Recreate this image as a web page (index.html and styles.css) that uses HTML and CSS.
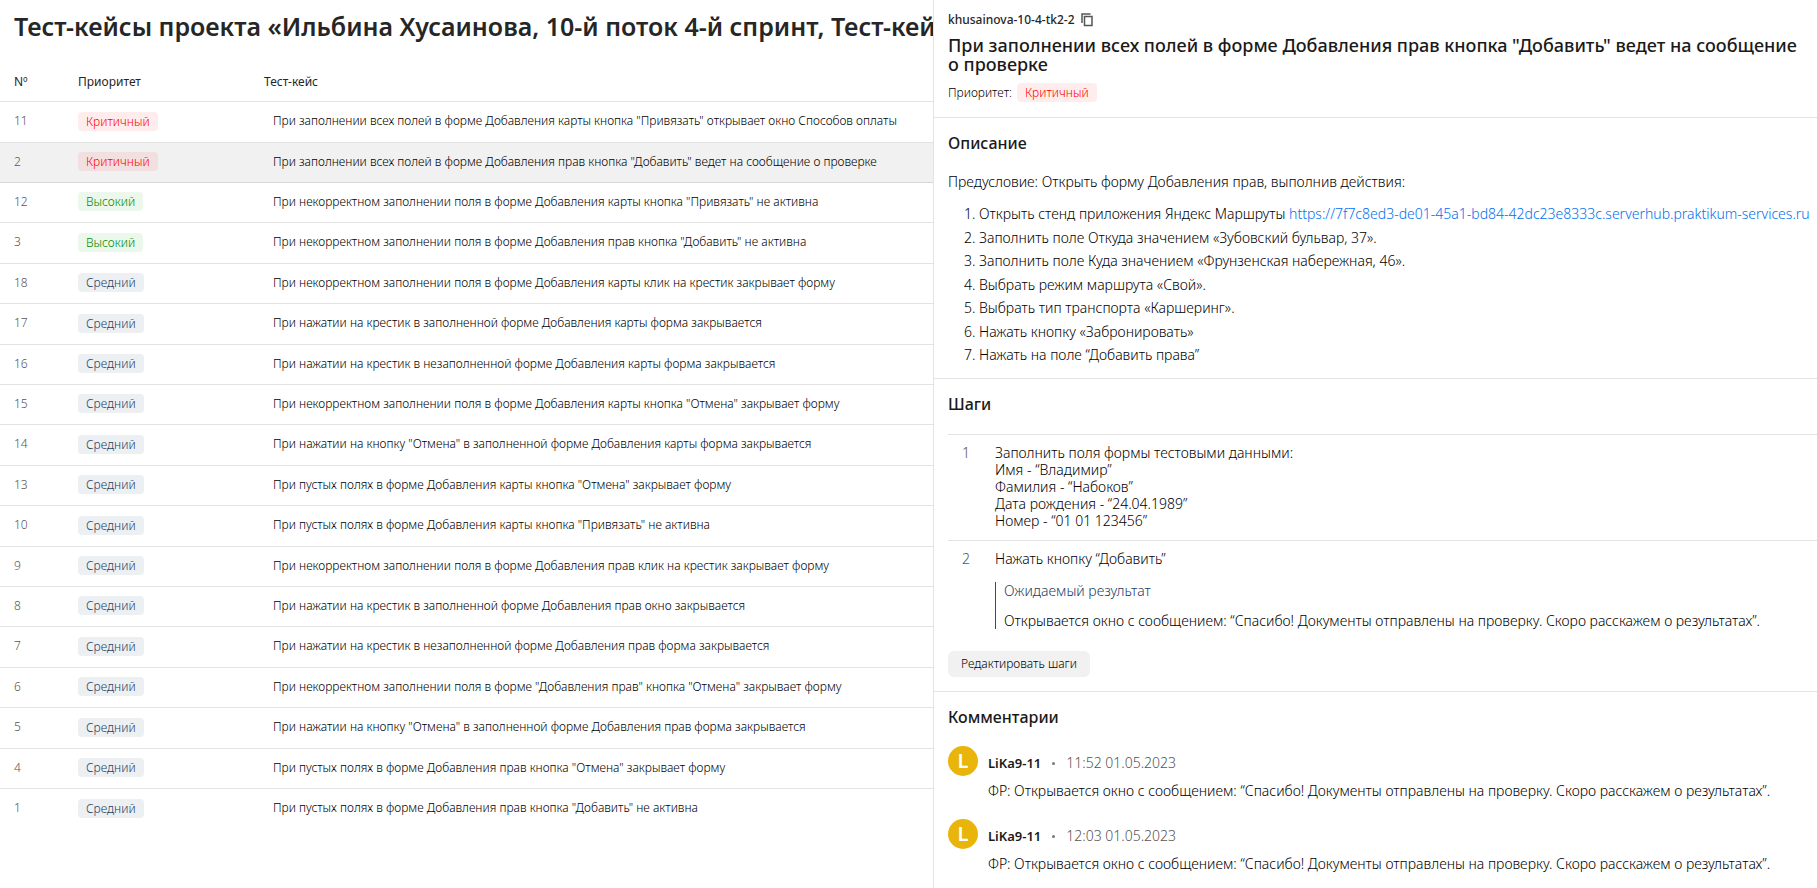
FILE: index.html
```
<!DOCTYPE html>
<html lang="ru">
<head>
<meta charset="utf-8">
<title>Тест-кейсы проекта</title>
<link rel="stylesheet" href="styles.css">
</head>
<body>
<div class="layout">
  <main class="cases">
    <h1 class="cases__title">Тест-кейсы проекта «Ильбина Хусаинова, 10-й поток 4-й спринт, Тест-кейсы»</h1>
    <table class="table">
      <thead>
        <tr><th class="table__num">Nº</th><th class="table__priority">Приоритет</th><th class="table__case">Тест-кейс</th></tr>
      </thead>
      <tbody>
        <tr><td>11</td><td><span class="badge badge--critical">Критичный</span></td><td>При заполнении всех полей в форме Добавления карты кнопка "Привязать" открывает окно Способов оплаты</td></tr>
        <tr class="is-selected"><td>2</td><td><span class="badge badge--critical">Критичный</span></td><td>При заполнении всех полей в форме Добавления прав кнопка "Добавить" ведет на сообщение о проверке</td></tr>
        <tr><td>12</td><td><span class="badge badge--high">Высокий</span></td><td>При некорректном заполнении поля в форме Добавления карты кнопка "Привязать" не активна</td></tr>
        <tr><td>3</td><td><span class="badge badge--high">Высокий</span></td><td>При некорректном заполнении поля в форме Добавления прав кнопка "Добавить" не активна</td></tr>
        <tr><td>18</td><td><span class="badge">Средний</span></td><td>При некорректном заполнении поля в форме Добавления карты клик на крестик закрывает форму</td></tr>
        <tr><td>17</td><td><span class="badge">Средний</span></td><td>При нажатии на крестик в заполненной форме Добавления карты форма закрывается</td></tr>
        <tr><td>16</td><td><span class="badge">Средний</span></td><td>При нажатии на крестик в незаполненной форме Добавления карты форма закрывается</td></tr>
        <tr><td>15</td><td><span class="badge">Средний</span></td><td>При некорректном заполнении поля в форме Добавления карты кнопка "Отмена" закрывает форму</td></tr>
        <tr><td>14</td><td><span class="badge">Средний</span></td><td>При нажатии на кнопку "Отмена" в заполненной форме Добавления карты форма закрывается</td></tr>
        <tr><td>13</td><td><span class="badge">Средний</span></td><td>При пустых полях в форме Добавления карты кнопка "Отмена" закрывает форму</td></tr>
        <tr><td>10</td><td><span class="badge">Средний</span></td><td>При пустых полях в форме Добавления карты кнопка "Привязать" не активна</td></tr>
        <tr><td>9</td><td><span class="badge">Средний</span></td><td>При некорректном заполнении поля в форме Добавления прав клик на крестик закрывает форму</td></tr>
        <tr><td>8</td><td><span class="badge">Средний</span></td><td>При нажатии на крестик в заполненной форме Добавления прав окно закрывается</td></tr>
        <tr><td>7</td><td><span class="badge">Средний</span></td><td>При нажатии на крестик в незаполненной форме Добавления прав форма закрывается</td></tr>
        <tr><td>6</td><td><span class="badge">Средний</span></td><td>При некорректном заполнении поля в форме "Добавления прав" кнопка "Отмена" закрывает форму</td></tr>
        <tr><td>5</td><td><span class="badge">Средний</span></td><td>При нажатии на кнопку "Отмена" в заполненной форме Добавления прав форма закрывается</td></tr>
        <tr><td>4</td><td><span class="badge">Средний</span></td><td>При пустых полях в форме Добавления прав кнопка "Отмена" закрывает форму</td></tr>
        <tr><td>1</td><td><span class="badge">Средний</span></td><td>При пустых полях в форме Добавления прав кнопка "Добавить" не активна</td></tr>
      </tbody>
    </table>
  </main>

  <aside class="details">
    <header class="summary">
      <div class="summary__id">
        <span>khusainova-10-4-tk2-2</span>
        <button class="copy" type="button" aria-label="Скопировать">
          <svg class="copy__icon" width="12" height="14" viewBox="0 0 12 14" fill="none" stroke="#555">
            <path d="M1 10V1h8.5" stroke-width="1.5"/>
            <rect x="3.5" y="3.5" width="7.5" height="9" stroke-width="1.5"/>
          </svg>
        </button>
      </div>
      <h2 class="summary__title">При заполнении всех полей в форме Добавления прав кнопка "Добавить" ведет на сообщение о проверке</h2>
      <div class="summary__priority"><span>Приоритет:</span><span class="badge badge--critical">Критичный</span></div>
    </header>

    <section class="section section--description">
      <h3 class="section__title">Описание</h3>
      <p class="precondition">Предусловие: Открыть форму Добавления прав, выполнив действия:</p>
      <ol class="actions">
        <li>Открыть стенд приложения Яндекс Маршруты <a class="link" href="https://7f7c8ed3-de01-45a1-bd84-42dc23e8333c.serverhub.praktikum-services.ru">https://7f7c8ed3-de01-45a1-bd84-42dc23e8333c.serverhub.praktikum-services.ru</a></li>
        <li>Заполнить поле Откуда значением «Зубовский бульвар, 37».</li>
        <li>Заполнить поле Куда значением «Фрунзенская набережная, 46».</li>
        <li>Выбрать режим маршрута «Свой».</li>
        <li>Выбрать тип транспорта «Каршеринг».</li>
        <li>Нажать кнопку «Забронировать»</li>
        <li>Нажать на поле “Добавить права”</li>
      </ol>
    </section>

    <section class="section section--steps">
      <h3 class="section__title">Шаги</h3>
      <div class="steps">
        <div class="step">
          <span class="step__num">1</span>
          <div>Заполнить поля формы тестовыми данными:<br>Имя - “Владимир”<br>Фамилия - “Набоков”<br>Дата рождения - “24.04.1989”<br>Номер - “01 01 123456”</div>
        </div>
        <div class="step">
          <span class="step__num">2</span>
          <div>
            <div>Нажать кнопку “Добавить”</div>
            <div class="expected">
              <div class="expected__label">Ожидаемый результат</div>
              <div>Открывается окно с сообщением: “Спасибо! Документы отправлены на проверку. Скоро расскажем о результатах”.</div>
            </div>
          </div>
        </div>
      </div>
      <button class="button" type="button">Редактировать шаги</button>
    </section>

    <section class="section">
      <h3 class="section__title">Комментарии</h3>
      <div class="comments">
        <article class="comment">
          <div class="avatar">L</div>
          <div class="comment__body">
            <div class="comment__head"><b class="comment__author">LiKa9-11</b><i class="comment__dot"></i><time>11:52 01.05.2023</time></div>
            <div>ФР: Открывается окно с сообщением: “Спасибо! Документы отправлены на проверку. Скоро расскажем о результатах”.</div>
          </div>
        </article>
        <article class="comment">
          <div class="avatar">L</div>
          <div class="comment__body">
            <div class="comment__head"><b class="comment__author">LiKa9-11</b><i class="comment__dot"></i><time>12:03 01.05.2023</time></div>
            <div>ФР: Открывается окно с сообщением: “Спасибо! Документы отправлены на проверку. Скоро расскажем о результатах”.</div>
          </div>
        </article>
      </div>
    </section>
  </aside>
</div>
</body>
</html>
```
FILE: styles.css
```
* {
  box-sizing: border-box;
}

body {
  margin: 0;
  background: #fff;
  color: #000;
  font: 300 14px/20px "Noto Sans", "Open Sans", sans-serif;
}

h1, h2, h3, p, ol {
  margin: 0;
}

.layout {
  display: grid;
  grid-template-columns: minmax(0, 934fr) minmax(0, 883fr);
  min-height: 100vh;
}

/* Case list */
.cases {
  border-right: 1px solid #e3e3e3;
  padding-top: 12px;
  overflow: hidden;
}

.cases__title {
  padding-left: 14px;
  color: #262626;
  font-size: 25px;
  font-weight: 600;
  line-height: 28px;
  white-space: nowrap;
}

.table {
  width: 100%;
  border-collapse: separate;
  border-spacing: 0;
  table-layout: fixed;
  font-size: 12px;
  line-height: 16px;
}

.table th {
  height: 62px;
  padding: 34px 0 0;
  border-bottom: 1px solid #e3e3e3;
  font-weight: 400;
  color: #262626;
  text-align: left;
  vertical-align: top;
}

.table th.table__num {
  width: 78px;
  padding-left: 14px;
}

.table__priority {
  width: 186px;
}

.table td {
  height: 40px;
  padding: 0 0 2px;
  border-bottom: 1px solid #e3e3e3;
  vertical-align: middle;
}

.table tr:nth-child(5n + 1) td,
.table tr:nth-child(5n + 4) td {
  height: 41px;
}

.table tr:last-child td {
  border-bottom: 0;
}

.table td:first-child {
  padding-left: 14px;
  color: #555;
}

.table td:last-child {
  padding-left: 9px;
}

.table .is-selected td {
  background: #f1f1f1;
  border-bottom-color: #d6d6d6;
}

.badge {
  display: inline-block;
  padding: 0 8px;
  border-radius: 4px;
  background: rgba(67, 111, 142, 0.1);
  color: #1c3c64;
  font-size: 12px;
  line-height: 19px;
  vertical-align: middle;
}

.badge--critical {
  background: rgba(255, 0, 0, 0.07);
  color: #f00;
}

.badge--high {
  background: rgba(0, 170, 0, 0.08);
  color: #080;
}

/* Details */
.summary {
  padding: 12px 12px 15px 14px;
  border-bottom: 1px solid #e3e3e3;
}

.summary__id {
  display: flex;
  align-items: center;
  gap: 6px;
  color: #262626;
  font-size: 12px;
  font-weight: 500;
  line-height: 16px;
}

.copy {
  display: flex;
  padding: 0;
  border: 0;
  background: none;
  cursor: pointer;
}

.summary__title {
  margin: 8px 0 9px;
  color: #1a1a1a;
  font-size: 18px;
  font-weight: 500;
  line-height: 19px;
}

.summary__priority {
  display: flex;
  gap: 5px;
  font-size: 12px;
  line-height: 19px;
}

.section {
  padding: 15px 4px 14px 14px;
}

.section--description,
.section--steps {
  border-bottom: 1px solid #e3e3e3;
}

.section--description {
  padding-bottom: 11px;
}

.section--steps {
  padding-right: 0;
}

.section__title {
  color: #1a1a1a;
  font-size: 16px;
  font-weight: 500;
  line-height: 20px;
}

.precondition {
  margin: 19px 0 10px;
}

.actions {
  padding-left: 31px;
  line-height: 23px;
}

.actions li:nth-child(odd) {
  line-height: 24px;
}

.link {
  color: #0070f0;
  text-decoration: none;
}

.steps {
  margin: 20px 0 11px;
  line-height: 17px;
}

.step {
  display: grid;
  grid-template-columns: 33px 1fr;
  padding: 9px 0 11px 14px;
  border-top: 1px solid #e3e3e3;
}

.step__num {
  color: #555;
}

.expected {
  display: grid;
  gap: 13px;
  margin-top: 15px;
  padding-left: 8px;
  border-left: 1px solid #2c4c70;
}

.expected__label {
  color: #1c3c64;
}

.button {
  display: block;
  padding: 0 13px;
  border: 0;
  border-radius: 6px;
  background: #f1f1f1;
  color: #000;
  font: inherit;
  font-size: 12px;
  line-height: 26px;
  cursor: pointer;
}

.comments {
  display: grid;
  gap: 18px;
  margin-top: 19px;
}

.comment {
  display: grid;
  grid-template-columns: 30px 1fr;
  gap: 10px;
}

.avatar {
  height: 30px;
  border-radius: 50%;
  background: #e9b50b;
  color: #fff;
  font-size: 20px;
  font-weight: 600;
  line-height: 30px;
  text-align: center;
}

.comment__body {
  display: grid;
  gap: 8px;
  padding-top: 7px;
}

.comment__head {
  display: flex;
  align-items: center;
  gap: 11px;
  color: #555;
}

.comment__author {
  color: #1a1a1a;
  font-size: 13px;
  font-weight: 600;
}

.comment__dot {
  width: 3px;
  height: 3px;
  border-radius: 50%;
  background: #777;
}
```
